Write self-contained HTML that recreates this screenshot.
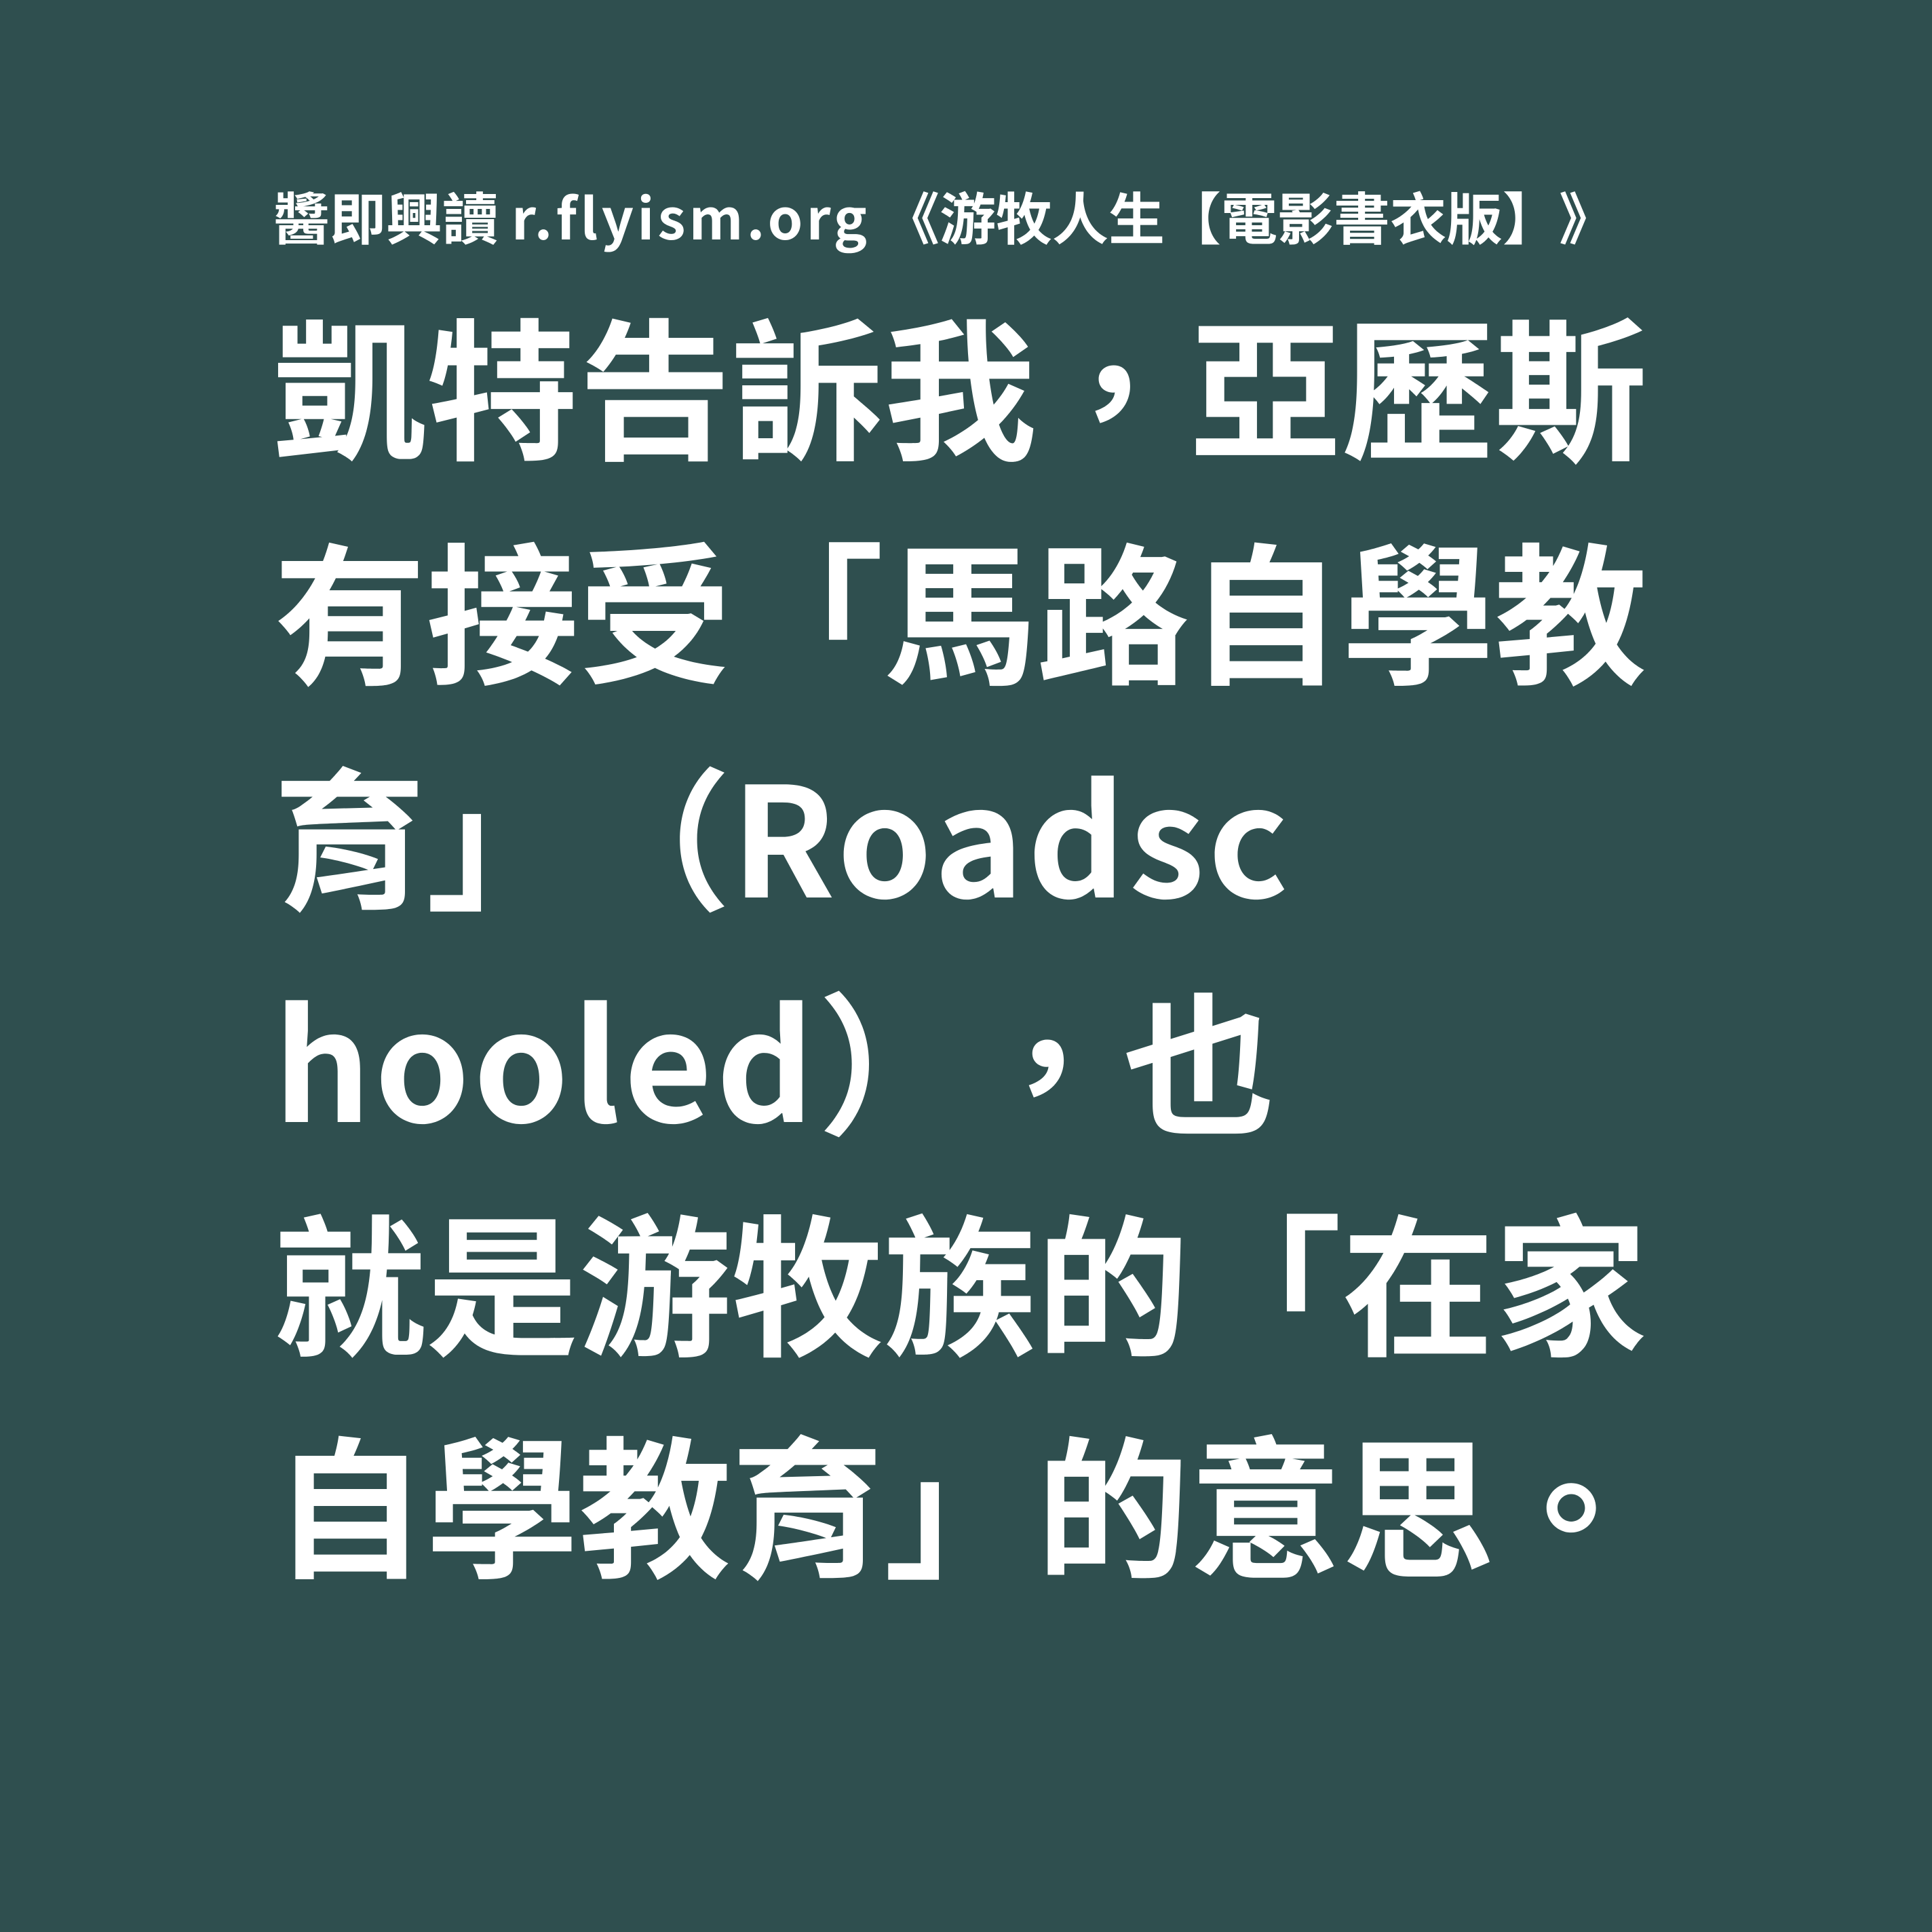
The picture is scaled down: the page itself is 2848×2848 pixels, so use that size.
<!DOCTYPE html>
<html>
<head>
<meta charset="utf-8">
<style>
html,body{margin:0;padding:0;}
body{width:2848px;height:2848px;background:#2f4f4f;position:relative;overflow:hidden;
font-family:"Noto Sans CJK TC","Noto Sans CJK SC",sans-serif;color:#fff;font-weight:700;
text-spacing-trim:space-all;font-feature-settings:"halt" 0,"chws" 0,"palt" 0;}
.h{position:absolute;left:403px;top:262px;font-size:83px;line-height:110px;white-space:nowrap;}
.h .e{letter-spacing:5px;}
.l{position:absolute;left:403px;font-size:225px;line-height:330px;white-space:nowrap;}
.l .e{letter-spacing:5px;}
</style>
</head>
<body>
<div class="h">醬即興讀 <span class="e">r.flyism.org</span> 《游牧人生【電影書衣版】》</div>
<div class="l" style="top:397px">凱特告訴我，亞歷斯</div>
<div class="l" style="top:728px">有接受「馬路自學教</div>
<div class="l" style="top:1060px">育」（<span class="e">Roadsc</span></div>
<div class="l" style="top:1391px"><span class="e">hooled</span>），也</div>
<div class="l" style="top:1718px">就是游牧族的「在家</div>
<div class="l" style="top:2045px">自學教育」的意思。</div>
</body>
</html>
